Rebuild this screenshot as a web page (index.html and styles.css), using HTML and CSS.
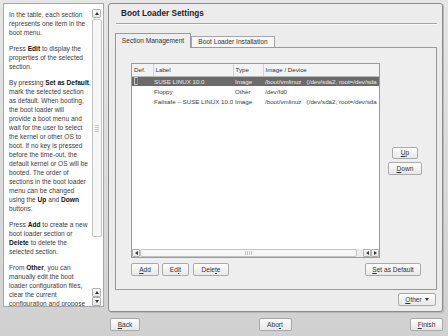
FILE: index.html
```html
<!DOCTYPE html>
<html lang="en">
<head>
    <meta charset="UTF-8">
    <title>Boot Loader Settings</title>
    <link rel="stylesheet" href="styles.css">
</head>
<body>
    <div class="main">
        <aside class="help">
            <div class="help-text">
                <p>In the table, each section<br>represents one item in the<br>boot menu.</p>
                <p>Press <b>Edit</b> to display the<br>properties of the selected<br>section.</p>
                <p>By pressing <b>Set as Default</b>,<br>mark the selected section<br>as default. When booting,<br>the boot loader will<br>provide a boot menu and<br>wait for the user to select<br>the kernel or other OS to<br>boot. If no key is pressed<br>before the time-out, the<br>default kernel or OS will be<br>booted. The order of<br>sections in the boot loader<br>menu can be changed<br>using the <b>Up</b> and <b>Down</b><br>buttons.</p>
                <p>Press <b>Add</b> to create a new<br>boot loader section or<br><b>Delete</b> to delete the<br>selected section.</p>
                <p>From <b>Other</b>, you can<br>manually edit the boot<br>loader configuration files,<br>clear the current<br>configuration and propose</p>
            </div>
            <div class="vscroll">
                <span class="arrow up"></span>
                <span class="thumb"><span class="grip"></span></span>
                <span class="track"></span>
                <span class="arrow up"></span>
                <span class="arrow down"></span>
            </div>
        </aside>

        <section class="frame">
            <h1 class="title">Boot Loader Settings</h1>
            <div class="rule"></div>
            <div class="tabs">
                <span class="tab active">Section Management</span>
                <span class="tab">Boot Loader Installation</span>
            </div>
            <div class="pane">
                <div class="pane-top">
                    <div class="list">
                        <table>
                            <thead>
                                <tr>
                                    <th class="c-def">Def.</th>
                                    <th class="c-label">Label</th>
                                    <th class="c-type">Type</th>
                                    <th>Image / Device</th>
                                </tr>
                            </thead>
                            <tbody>
                                <tr class="selected">
                                    <td><span class="check"></span></td>
                                    <td>SUSE LINUX 10.0</td>
                                    <td>Image</td>
                                    <td>/boot/vmlinuz&nbsp;&nbsp; (/dev/sda2, root=/dev/sda</td>
                                </tr>
                                <tr>
                                    <td></td>
                                    <td>Floppy</td>
                                    <td>Other</td>
                                    <td>/dev/fd0</td>
                                </tr>
                                <tr>
                                    <td></td>
                                    <td>Failsafe – SUSE LINUX 10.0</td>
                                    <td>Image</td>
                                    <td>/boot/vmlinuz&nbsp;&nbsp; (/dev/sda2, root=/dev/sda</td>
                                </tr>
                            </tbody>
                        </table>
                        <div class="hscroll">
                            <span class="arrow left"></span>
                            <span class="thumb"><span class="grip"></span></span>
                            <span class="arrow left"></span>
                            <span class="arrow right"></span>
                        </div>
                    </div>
                    <div class="updown">
                        <button class="btn btn-up"><u>U</u>p</button>
                        <button class="btn btn-down"><u>D</u>own</button>
                    </div>
                </div>
                <div class="actions">
                    <button class="btn btn-add"><u>A</u>dd</button>
                    <button class="btn btn-edit">Ed<u>i</u>t</button>
                    <button class="btn btn-delete">Dele<u>t</u>e</button>
                    <button class="btn btn-default"><u>S</u>et as Default</button>
                </div>
            </div>
            <div class="other-row">
                <button class="btn btn-other"><span><u>O</u>ther</span><span class="caret"></span></button>
            </div>
        </section>
    </div>

    <div class="navbar">
        <button class="btn btn-back"><u>B</u>ack</button>
        <button class="btn btn-abort">Abo<u>r</u>t</button>
        <button class="btn btn-finish"><u>F</u>inish</button>
    </div>
</body>
</html>
```

FILE: styles.css
```css
* {
    box-sizing: border-box;
}
body {
    margin: 0;
    width: 448px;
    height: 336px;
    overflow: hidden;
    background: linear-gradient(#e6e6e6, #d0d0d0);
    font-family: "Liberation Sans", Arial, sans-serif;
    font-size: 6.6px;
    color: #333;
}
.main {
    display: flex;
    align-items: flex-start;
    gap: 4px;
    padding: 3px 0 0 3px;
}

/* help panel */
.help {
    width: 101px;
    height: 304px;
    background: #fff;
    border: 1px solid #a8a8a8;
    display: flex;
}
.help-text {
    flex: 1;
    padding: 6px 0 0 5px;
    overflow: hidden;
    line-height: 9px;
    white-space: nowrap;
    color: #3c3c3c;
}
.help-text p {
    margin: 0 0 7px;
}
.help-text b {
    color: #111;
}
.vscroll {
    width: 10px;
    height: 297px;
    margin: 5px 1px 0 0;
    display: flex;
    flex-direction: column;
}
.vscroll .arrow {
    height: 9px;
}
.vscroll .thumb {
    height: 218px;
    margin: 1px 0;
}
.vscroll .track {
    flex: 1;
}

/* scrollbar pieces */
.arrow {
    width: 9px;
    height: 8px;
    flex: none;
    border: 1px solid #b0b0b0;
    border-radius: 1px;
    background: linear-gradient(#fdfdfd, #e6e6e6);
    display: flex;
    align-items: center;
    justify-content: center;
}
.arrow::after {
    content: "";
    border: 2px solid transparent;
}
.arrow.up::after {
    border-bottom: 3px solid #333;
    border-top: 0;
}
.arrow.down::after {
    border-top: 3px solid #333;
    border-bottom: 0;
}
.arrow.left::after {
    border-right: 3px solid #333;
    border-left: 0;
}
.arrow.right::after {
    border-left: 3px solid #333;
    border-right: 0;
}
.thumb {
    border: 1px solid #c4c4c4;
    border-radius: 2px;
    background: #f6f6f6;
    display: flex;
    align-items: center;
    justify-content: center;
}
.grip {
    width: 7px;
    height: 4px;
    background: repeating-linear-gradient(90deg, #c8c8c8 0 1px, transparent 1px 2px);
}
.vscroll .grip {
    width: 4px;
    height: 7px;
    background: repeating-linear-gradient(#c8c8c8 0 1px, transparent 1px 2px);
}

/* main frame */
.frame {
    width: 335px;
    height: 309px;
    border: 1px solid #8c8c8c;
    border-radius: 3px;
    box-shadow: 1px 1px 0 #b8b8b8;
    background: #ececec;
    padding: 0 5px 5px 6px;
    display: flex;
    flex-direction: column;
}
.title {
    margin: 0;
    height: 19px;
    line-height: 19px;
    padding-left: 6px;
    font-size: 8.2px;
    font-weight: bold;
    color: #222;
}
.rule {
    height: 2px;
    margin-left: 1px;
    border-top: 1px solid #a4a4a4;
    border-bottom: 1px solid #fafafa;
}
.tabs {
    display: flex;
    align-items: flex-end;
    height: 15px;
    margin-top: 8px;
    margin-bottom: -1px;
    position: relative;
    z-index: 1;
}
.tab {
    height: 11px;
    width: 84px;
    margin-bottom: 1px;
    border: 1px solid #a6a6a6;
    border-bottom: none;
    background: #f7f7f7;
    text-align: center;
    line-height: 10px;
    color: #333;
}
.tab.active {
    width: 76px;
    height: 15px;
    margin-bottom: 0;
    border-color: #999;
    background: #eeeeee;
    line-height: 13px;
}
.pane {
    height: 243px;
    border: 1px solid #9a9a9a;
    background: #eeeeee;
    padding: 15px 6px 13px 15px;
}
.pane-top {
    display: flex;
    height: 195px;
}

/* table */
.list {
    width: 249px;
    border: 1px solid #9a9a9a;
    background: #fff;
    display: flex;
    flex-direction: column;
    overflow: hidden;
    font-size: 6.2px;
}
.list table {
    width: 100%;
    table-layout: fixed;
    border-collapse: collapse;
    white-space: nowrap;
}
.list th {
    height: 12px;
    padding: 0 0 0 2px;
    text-align: left;
    font-weight: normal;
    color: #333;
    background: #f3f3f3;
    border-right: 1px solid #d2d2d2;
    border-bottom: 1px solid #b8b8b8;
}
.list th:last-child {
    border-right: none;
}
.c-def {
    width: 21px;
}
.c-label {
    width: 80px;
}
.c-type {
    width: 30px;
}
.list td {
    height: 10px;
    padding: 0 0 0 2px;
    overflow: hidden;
    color: #3a3a3a;
}
.list td:nth-child(2) {
    padding-left: 1px;
}
.list tr.selected td {
    background: #6b6b6b;
    color: #ececec;
}
.check {
    display: block;
    width: 4px;
    height: 8px;
    border: 1px solid #c8c8c8;
    border-right-color: #888;
}
.hscroll {
    margin-top: auto;
    height: 8px;
    display: flex;
    background: #ececec;
}
.hscroll .thumb {
    flex: 1;
    margin-right: 6px;
}
.hscroll .arrow {
    width: 8px;
    height: 8px;
}

.updown {
    flex: 1;
    display: flex;
    flex-direction: column;
    align-items: center;
    justify-content: center;
    gap: 3px;
}

/* buttons */
.btn {
    height: 13px;
    padding: 0;
    border: 1px solid #a9a9a9;
    border-radius: 2px;
    background: linear-gradient(#fdfdfd, #e8e8e8);
    font: inherit;
    color: #333;
    display: flex;
    align-items: center;
    justify-content: center;
}
.btn-up {
    width: 26px;
    height: 12px;
}
.btn-down {
    width: 34px;
}
.actions {
    display: flex;
    gap: 3px;
    margin-top: 5px;
    margin-right: 9px;
}
.btn-add {
    width: 28px;
}
.btn-edit {
    width: 27px;
}
.btn-delete {
    width: 36px;
    margin-left: 1px;
}
.btn-default {
    width: 56px;
    margin-left: auto;
}
.other-row {
    display: flex;
    justify-content: flex-end;
    margin-top: 3px;
    padding-right: 1px;
}
.btn-other {
    width: 38px;
}
.caret {
    margin-left: 3px;
    border: 2px solid transparent;
    border-top: 3px solid #333;
    border-bottom: 0;
}

/* bottom navigation */
.navbar {
    display: flex;
    justify-content: space-between;
    padding: 0 5px 0 110px;
    margin-top: 6px;
}
.btn-back {
    width: 30px;
}
.btn-abort {
    width: 33px;
}
.btn-finish {
    width: 33px;
}
```
